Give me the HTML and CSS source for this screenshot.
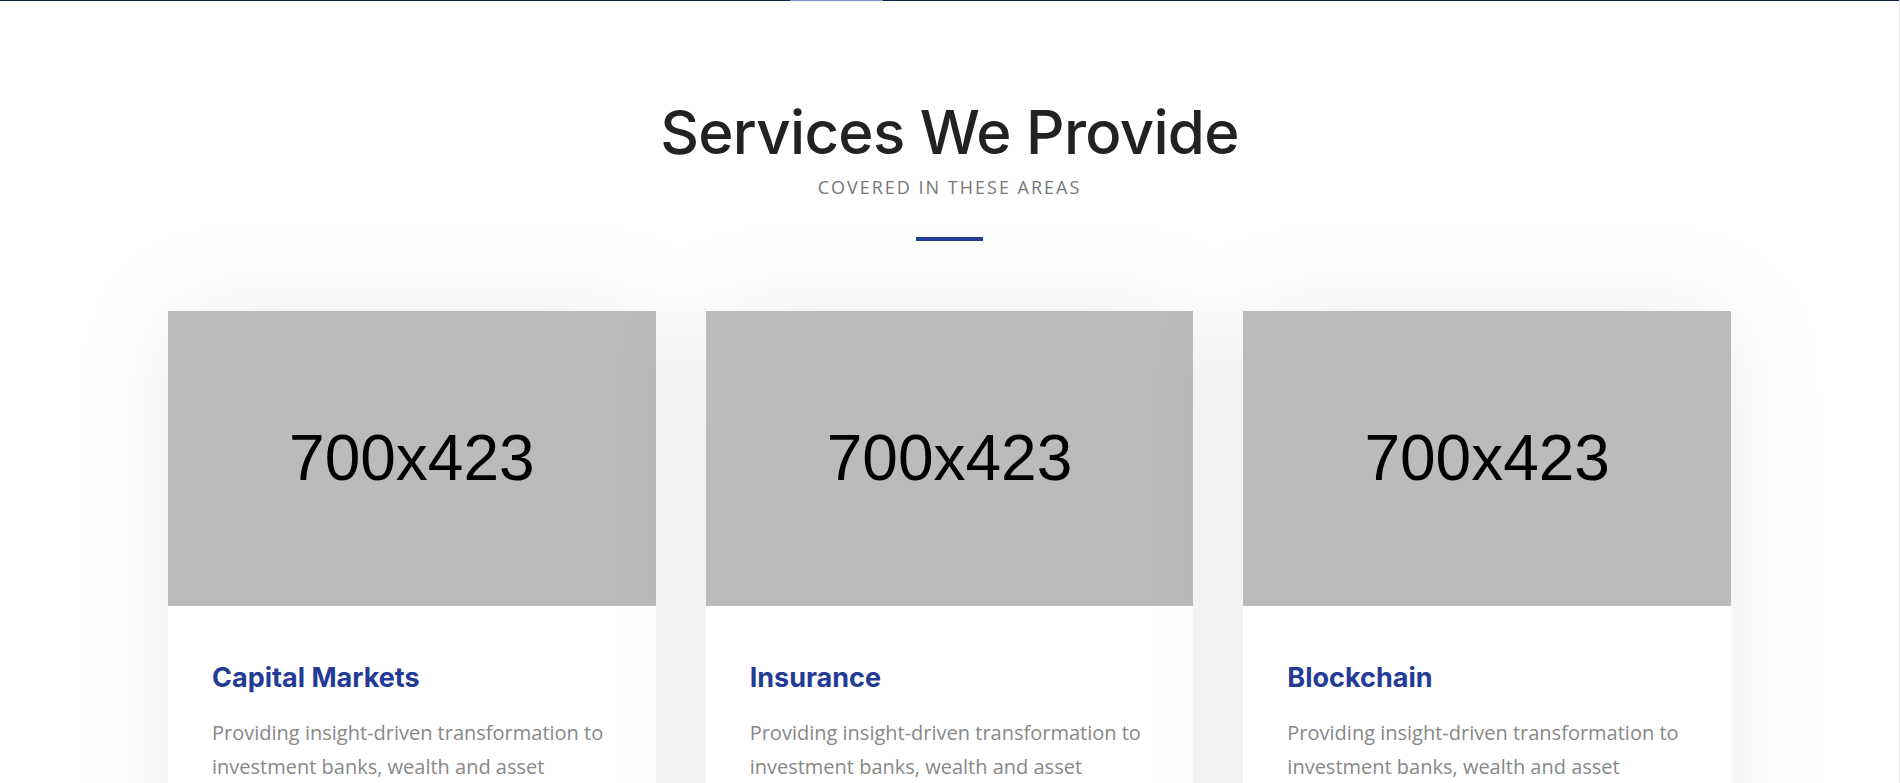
FILE: index.html
```html
<!DOCTYPE html>
<html lang="en">
<head>
<meta charset="utf-8">
<title>Services We Provide</title>
<link rel="stylesheet" href="styles.css">
</head>
<body>
<div class="page">
  <header class="topbar"><span class="topbar-active"></span></header>
  <section class="services">
    <h2 class="services-title">Services We Provide</h2>
    <p class="services-subtitle">Covered in these areas</p>
    <span class="services-rule"></span>
    <div class="cards">
      <article class="card">
        <div class="card-image">700x423</div>
        <div class="card-body">
          <h3 class="card-title">Capital Markets</h3>
          <p class="card-text">Providing insight-driven transformation to investment banks, wealth and asset managers, exchanges and market infrastructures.</p>
        </div>
      </article>
      <article class="card">
        <div class="card-image">700x423</div>
        <div class="card-body">
          <h3 class="card-title">Insurance</h3>
          <p class="card-text">Providing insight-driven transformation to investment banks, wealth and asset managers, exchanges and market infrastructures.</p>
        </div>
      </article>
      <article class="card">
        <div class="card-image">700x423</div>
        <div class="card-body">
          <h3 class="card-title">Blockchain</h3>
          <p class="card-text">Providing insight-driven transformation to investment banks, wealth and asset managers, exchanges and market infrastructures.</p>
        </div>
      </article>
    </div>
  </section>
</div>
</body>
</html>
```
FILE: styles.css
```css
html, body {
  margin: 0;
  padding: 0;
  background: #ffffff;
  overflow: hidden;
}

.page {
  width: 1900px;
  height: 783px;
  overflow: hidden;
  box-sizing: border-box;
  border-right: 1px solid #e8e8e8;
  font-family: "Open Sans", "Noto Sans", sans-serif;
}

.topbar {
  display: flex;
  height: 1px;
  background: #0f1d40;
  box-shadow: 0 1px 4px rgba(0, 0, 0, 0.06);
}

.topbar-active {
  margin-left: 790px;
  width: 93px;
  background: #7e90d6;
}

.services {
  display: flex;
  flex-direction: column;
  align-items: center;
  padding-top: 95px;
  text-align: center;
}

.services-title {
  margin: 0;
  font-family: "Inter", "Open Sans", sans-serif;
  font-weight: 500;
  font-size: 60px;
  line-height: 72px;
  letter-spacing: -0.7px;
  color: #222222;
}

.services-subtitle {
  margin: 7px 0 0;
  font-size: 18px;
  line-height: 24px;
  letter-spacing: 2px;
  text-transform: uppercase;
  color: #777777;
}

.services-rule {
  display: block;
  width: 67px;
  height: 4px;
  margin-top: 38px;
  background: #243d96;
}

.cards {
  display: grid;
  grid-template-columns: repeat(3, 1fr);
  gap: 50px;
  width: 1563px;
  margin-top: 70px;
  text-align: left;
}

.card {
  background: #ffffff;
  box-shadow: 0 0 100px rgba(0, 0, 0, 0.08);
}

.card-image {
  display: flex;
  align-items: center;
  justify-content: center;
  aspect-ratio: 700 / 423;
  background: #bbbbbb;
  font-family: "Liberation Sans", Arial, sans-serif;
  font-size: 64px;
  color: #000000;
}

.card-body {
  padding: 55px 44px 40px;
}

.card-title {
  margin: 0 0 21px;
  font-family: "Inter", "Open Sans", sans-serif;
  font-weight: 700;
  font-size: 27px;
  line-height: 34px;
  color: #243b96;
}

.card-text {
  margin: 0;
  font-size: 20px;
  line-height: 34px;
  color: #888888;
}
```
